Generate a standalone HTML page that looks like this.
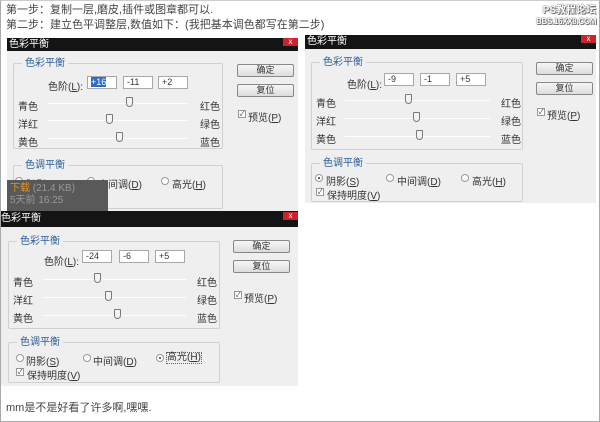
<!DOCTYPE html>
<html><head><meta charset="utf-8"><style>
*{margin:0;padding:0;box-sizing:border-box}
body{width:600px;height:422px;overflow:hidden;background:#fff;font-family:"Liberation Sans","Noto Sans CJK SC",sans-serif;font-size:10px;color:#333;position:relative}
.frame{position:absolute;left:0;top:0;width:600px;height:422px;border:1px solid #aaa;border-top:1px solid #ccc}
.a{position:absolute;white-space:nowrap}
.txt{font-size:11px;color:#444;line-height:13px}
.dlg{position:absolute;width:291px;background:#efefef;overflow:hidden}
.tb{position:absolute;left:0;top:0;width:291px;height:13px;background:#141414;color:#fff;font-size:10px;line-height:13px;padding-left:2px}
.cls{position:absolute;right:0;top:0;width:15px;height:8px;background:#c8242a;color:#fff;font-size:8px;line-height:8px;text-align:center}
.grp{position:absolute;border:1px solid #d0d0d0;border-radius:2px}
.gl{position:absolute;background:#efefef;color:#2a5d9a;padding:0 3px;font-size:10px;line-height:12px}
.inp{position:absolute;width:30px;height:13px;background:#fff;border:1px solid #a8a8a8;font-size:9px;line-height:11px;padding-left:3px}
.trk{position:absolute;height:1px;background:#c8c8c8;border-bottom:1px solid #fff}
.th{position:absolute;width:7px;height:10px;background:#f4f4f4;border:1px solid #7a7a7a;border-radius:1px 1px 4px 4px}
.btn{position:absolute;width:57px;height:13px;border:1px solid #888;border-radius:2px;background:linear-gradient(#f6f6f6,#dcdcdc);text-align:center;font-size:9px;line-height:11px}
.cb{position:absolute;width:8px;height:8px;border:1px solid #999;background:#fff;font-size:7px;line-height:7px;text-align:center;color:#333}
.rd{position:absolute;width:8px;height:8px;border:1px solid #999;border-radius:50%;background:#fff}
.rd.on::after{content:"";position:absolute;left:2px;top:2px;width:2px;height:2px;border-radius:50%;background:#333}
.u{text-decoration:underline}
</style></head><body>
<div class="frame"></div>
<div class="a txt" style="left:6px;top:4px">第一步：复制一层,磨皮,插件或图章都可以.</div>
<div class="a txt" style="left:6px;top:19px">第二步：建立色平调整层,数值如下：(我把基本调色都写在第二步)</div>
<div class="a" style="left:536px;top:5px;font-size:10px;font-weight:bold;color:#fff;text-shadow:0 0 1px #555,0 0 1px #555,1px 1px 0 #777;line-height:11px;text-align:right;width:60px">PS教程论坛<br><span style="font-size:8px;letter-spacing:-0.3px">BBS.16XX8.COM</span></div>

<!-- Dialog 1 -->
<div class="dlg" style="left:7px;top:38px;height:173px">
<div class="tb">色彩平衡</div><div class="cls">x</div>
<div class="grp" style="left:6px;top:25px;width:210px;height:86px"></div>
<div class="gl a" style="left:15px;top:20px">色彩平衡</div>
<div class="a" style="left:41px;top:40px">色阶(<span class="u">L</span>):</div>
<div class="inp" style="left:80px;top:38px;"><span style="background:#2d6dc4;color:#fff">+16</span></div>
<div class="inp" style="left:116px;top:38px">-11</div>
<div class="inp" style="left:151px;top:38px">+2</div>
<div class="a" style="left:11px;top:60px">青色</div><div class="a" style="left:193px;top:60px">红色</div>
<div class="a" style="left:11px;top:78px">洋红</div><div class="a" style="left:193px;top:78px">绿色</div>
<div class="a" style="left:11px;top:96px">黄色</div><div class="a" style="left:193px;top:96px">蓝色</div>
<div class="trk" style="left:40px;top:65px;width:141px"></div>
<div class="trk" style="left:40px;top:82px;width:141px"></div>
<div class="trk" style="left:40px;top:100px;width:141px"></div>
<div class="th" style="left:119px;top:59px"></div>
<div class="th" style="left:99px;top:76px"></div>
<div class="th" style="left:109px;top:94px"></div>
<div class="btn" style="left:230px;top:26px">确定</div>
<div class="btn" style="left:230px;top:46px">复位</div>
<div class="cb" style="left:231px;top:72px">✓</div><div class="a" style="left:241px;top:71px">预览(<span class="u">P</span>)</div>
<div class="grp" style="left:6px;top:127px;width:210px;height:44px"></div>
<div class="gl a" style="left:15px;top:122px">色调平衡</div>
<div class="rd" style="left:8px;top:139px"></div><div class="a" style="left:19px;top:138px">阴影(<span class="u">S</span>)</div>
<div class="rd on" style="left:80px;top:139px"></div><div class="a" style="left:91px;top:138px">中间调(<span class="u">D</span>)</div>
<div class="rd" style="left:154px;top:139px"></div><div class="a" style="left:165px;top:138px">高光(<span class="u">H</span>)</div>
</div>
<div class="a" style="left:7px;top:180px;width:101px;height:31px;background:#595959;color:#999;font-size:10px;line-height:12px;padding:3px 0 0 3px">
<span style="color:#e8941c">下载</span> (21.4 KB)<br>5天前 16:25</div>

<!-- Dialog 2 -->
<div class="dlg" style="left:305px;top:35px;height:168px">
<div class="tb" style="height:14px">色彩平衡</div><div class="cls">x</div>
<div class="grp" style="left:6px;top:27px;width:212px;height:88px"></div>
<div class="gl a" style="left:15px;top:22px">色彩平衡</div>
<div class="a" style="left:42px;top:41px">色阶(<span class="u">L</span>):</div>
<div class="inp" style="left:79px;top:38px">-9</div>
<div class="inp" style="left:115px;top:38px">-1</div>
<div class="inp" style="left:151px;top:38px">+5</div>
<div class="a" style="left:11px;top:60px">青色</div><div class="a" style="left:196px;top:60px">红色</div>
<div class="a" style="left:11px;top:78px">洋红</div><div class="a" style="left:196px;top:78px">绿色</div>
<div class="a" style="left:11px;top:96px">黄色</div><div class="a" style="left:196px;top:96px">蓝色</div>
<div class="trk" style="left:40px;top:65px;width:145px"></div>
<div class="trk" style="left:40px;top:83px;width:145px"></div>
<div class="trk" style="left:40px;top:101px;width:145px"></div>
<div class="th" style="left:100px;top:59px"></div>
<div class="th" style="left:108px;top:77px"></div>
<div class="th" style="left:111px;top:95px"></div>
<div class="btn" style="left:231px;top:27px">确定</div>
<div class="btn" style="left:231px;top:47px">复位</div>
<div class="cb" style="left:232px;top:73px">✓</div><div class="a" style="left:242px;top:72px">预览(<span class="u">P</span>)</div>
<div class="grp" style="left:6px;top:128px;width:212px;height:39px"></div>
<div class="gl a" style="left:15px;top:123px">色调平衡</div>
<div class="rd on" style="left:10px;top:139px"></div><div class="a" style="left:21px;top:138px">阴影(<span class="u">S</span>)</div>
<div class="rd" style="left:81px;top:139px"></div><div class="a" style="left:92px;top:138px">中间调(<span class="u">D</span>)</div>
<div class="rd" style="left:156px;top:139px"></div><div class="a" style="left:167px;top:138px">高光(<span class="u">H</span>)</div>
<div class="cb" style="left:11px;top:153px">✓</div><div class="a" style="left:22px;top:152px">保持明度(<span class="u">V</span>)</div>
</div>

<!-- Dialog 3 -->
<div class="dlg" style="left:1px;top:211px;height:175px;width:297px">
<div class="tb" style="height:16px;line-height:16px;width:297px;padding-left:0">色彩平衡</div><div class="cls" style="top:1px">x</div>
<div class="grp" style="left:7px;top:30px;width:212px;height:88px"></div>
<div class="gl a" style="left:16px;top:25px">色彩平衡</div>
<div class="a" style="left:43px;top:42px">色阶(<span class="u">L</span>):</div>
<div class="inp" style="left:81px;top:39px">-24</div>
<div class="inp" style="left:118px;top:39px">-6</div>
<div class="inp" style="left:154px;top:39px">+5</div>
<div class="a" style="left:12px;top:63px">青色</div><div class="a" style="left:196px;top:63px">红色</div>
<div class="a" style="left:12px;top:81px">洋红</div><div class="a" style="left:196px;top:81px">绿色</div>
<div class="a" style="left:12px;top:99px">黄色</div><div class="a" style="left:196px;top:99px">蓝色</div>
<div class="trk" style="left:42px;top:68px;width:143px"></div>
<div class="trk" style="left:42px;top:86px;width:143px"></div>
<div class="trk" style="left:42px;top:104px;width:143px"></div>
<div class="th" style="left:93px;top:62px"></div>
<div class="th" style="left:104px;top:80px"></div>
<div class="th" style="left:113px;top:98px"></div>
<div class="btn" style="left:232px;top:29px">确定</div>
<div class="btn" style="left:232px;top:49px">复位</div>
<div class="cb" style="left:233px;top:80px">✓</div><div class="a" style="left:243px;top:79px">预览(<span class="u">P</span>)</div>
<div class="grp" style="left:7px;top:131px;width:212px;height:41px"></div>
<div class="gl a" style="left:16px;top:126px">色调平衡</div>
<div class="rd" style="left:15px;top:143px"></div><div class="a" style="left:25px;top:142px">阴影(<span class="u">S</span>)</div>
<div class="rd" style="left:82px;top:143px"></div><div class="a" style="left:92px;top:142px">中间调(<span class="u">D</span>)</div>
<div class="rd on" style="left:155px;top:143px"></div><div class="a" style="left:165px;top:141px;border:1px dotted #666;line-height:10px">高光(<span class="u">H</span>)</div>
<div class="cb" style="left:15px;top:157px">✓</div><div class="a" style="left:26px;top:156px">保持明度(<span class="u">V</span>)</div>
</div>

<div class="a txt" style="left:6px;top:402px">mm是不是好看了许多啊,嘿嘿.</div>
</body></html>
